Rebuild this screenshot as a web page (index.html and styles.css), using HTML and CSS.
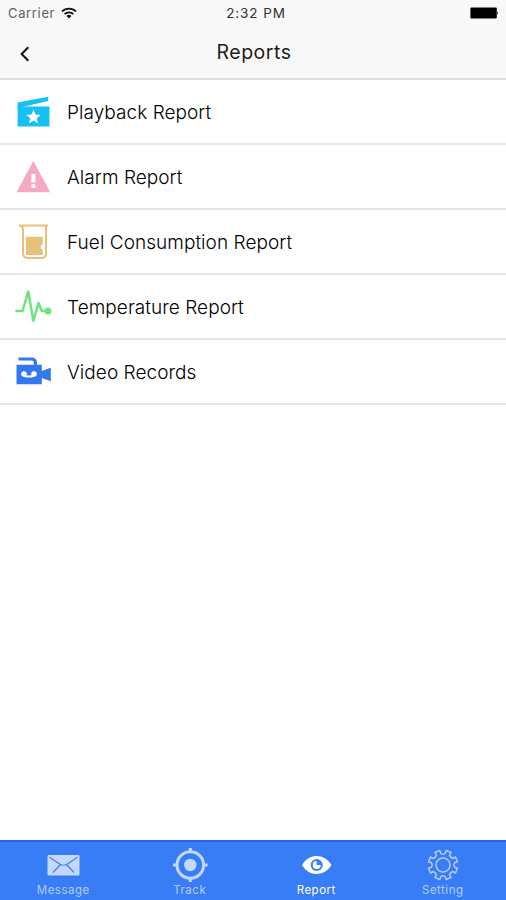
FILE: index.html
```html
<!DOCTYPE html>
<html lang="en">
<head>
<meta charset="utf-8">
<title>Reports</title>
<link rel="stylesheet" href="styles.css">
</head>
<body>
<div class="app">
  <header class="header">
    <div class="status">
      <div class="carrier"><span class="carrier-name">Carrier</span>
        <svg class="wifi" width="16" height="12" viewBox="0 0 16 12"><g fill="none" stroke="#111" stroke-width="1.8"><path d="M1 4.4a10 10 0 0 1 14 0"/><path d="M3.6 7.1a6.3 6.3 0 0 1 8.8 0"/></g><path fill="#111" d="M5.5 9a3.6 3.6 0 0 1 5 0L8 11.5z"/></svg>
      </div>
      <div class="time">2:32 PM</div>
      <div class="battery"><svg width="30" height="12" viewBox="0 0 30 12"><rect x="1.400" y=".6" width="26.4" height="10.8" rx="1"/><path d="M28.4 4q1.600 2 0 4z"/></svg></div>
    </div>
    <div class="nav">
      <a class="back" aria-label="Back"><svg width="12" height="18" viewBox="0 0 12 18"><path d="M10.300 2.200L3.600 9l6.700 6.800" fill="none" stroke="#111" stroke-width="2"/></svg></a>
      <h1 class="title">Reports</h1>
    </div>
  </header>
  <main class="list">
    <a class="row">
      <svg class="icon" viewBox="0 0 44 44"><g fill="#16c0f5"><path d="M5.600 12.400L36.200 6.800V11L9 17.200V18H5.600z"/><path fill-rule="evenodd" d="M5.600 16.600H37.500V36.500H5.600zM21.500 19.600l-2 4.900-5.200.4 4 3.400-1.300 5.100 4.500-2.800 4.500 2.800-1.300-5.100 4-3.400-5.200-.4z"/></g></svg>
      <span class="label">Playback Report</span>
    </a>
    <a class="row">
      <svg class="icon" viewBox="0 0 44 44"><path fill="#f5a9c3" d="M21.300 6L38.300 37.200H4.500z"/><path fill="#fff" d="M19.400 19h4v8.500h-4zM19.400 29.300h4v3.700h-4z"/></svg>
      <span class="label">Alarm Report</span>
    </a>
    <a class="row">
      <svg class="icon" viewBox="0 0 44 44"><path d="M7 5.500h29M8 5.500q3 1 3 4V33q0 5 5 5h13q5 0 5-5V5.500" fill="none" stroke="#e8c07c" stroke-width="2"/><path fill="#e8c07c" d="M13.800 16.800h17v7.500l-2 1.200v3l2 1.200v5.300h-17z"/></svg>
      <span class="label">Fuel Consumption Report</span>
    </a>
    <a class="row">
      <svg class="icon" viewBox="0 0 44 44"><path d="M3.400 26h7.100L16.200 6.500l5.200 29.500 5-18 3.500 8H36" fill="none" stroke="#6ce57d" stroke-width="2.500" stroke-linejoin="round"/><circle cx="36" cy="26" r="3.500" fill="#6ce57d"/></svg>
      <span class="label">Temperature Report</span>
    </a>
    <a class="row">
      <svg class="icon" viewBox="0 0 44 44"><path d="M6.500 9H19.500q4 0 4 4V17" fill="none" stroke="#3478f0" stroke-width="3.200"/><path fill="#3478f0" d="M4.500 14.800h25.300v6.200l9-3.200v13.400l-9-3.200v6.200h-25.300z"/><g fill="#fff"><circle cx="12" cy="24" r="2.800"/><circle cx="22" cy="24" r="2.800"/></g><path d="M12 25.800q5 1.600 10 0" fill="none" stroke="#fff" stroke-width="2"/></svg>
      <span class="label">Video Records</span>
    </a>
  </main>
  <nav class="tabs">
    <a class="tab">
      <svg class="tab-icon" viewBox="0 0 40 40"><rect x="4.500" y="10" width="32" height="20.500" rx="1.200" fill="#c4d7fd"/><path d="M6.500 12.200L17 19.200q3.500 2 7 0L34.500 12.200M10 27.500l7.500-8M31 27.500l-7.500-8" fill="none" stroke="#387df5" stroke-width="1.100"/></svg>
      <span>Message</span>
    </a>
    <a class="tab">
      <svg class="tab-icon" viewBox="0 0 40 40"><g fill="none" stroke="#c4d7fd" stroke-width="3"><circle cx="20.300" cy="20" r="13.300"/><path d="M20.300 3v5M20.300 32v5M3 20h5M32.600 20h5"/></g><circle cx="20.300" cy="20" r="6.200" fill="#c4d7fd"/></svg>
      <span>Track</span>
    </a>
    <a class="tab active">
      <svg class="tab-icon" viewBox="0 0 40 40"><path d="M6 20C13 8 28 8 35.500 20C28 32 13 32 6 20z" fill="#fff"/><circle cx="20.700" cy="20" r="6" fill="#387df5"/><path d="M20.700 16v4h4a4 4 0 1 1-4-4z" fill="#fff"/></svg>
      <span>Report</span>
    </a>
    <a class="tab">
      <svg class="tab-icon" viewBox="0 0 40 40"><g fill="none" stroke="#b4ccfc" stroke-width="1.500" stroke-linejoin="round"><path d="M17.800 8.500L16.800 5.500L12 7.500L13.500 10.400Q12.500 12.500 10.400 13.500L7.500 12L5.500 16.800L8.500 17.800Q10 20 8.500 22.200L5.500 23.200L7.500 28L10.400 26.500Q12.500 27.500 13.500 29.600L12 32.500L16.800 34.500L17.800 31.500Q20 30 22.200 31.500L23.200 34.500L28 32.500L26.500 29.600Q27.500 27.500 29.600 26.500L32.500 28L34.500 23.200L31.500 22.200Q30 20 31.500 17.800L34.500 16.800L32.500 12L29.600 13.500Q27.500 12.500 26.500 10.400L28 7.500L23.200 5.500L22.200 8.500Q20 10 17.800 8.500z"/><circle cx="20" cy="20" r="7"/></g></svg>
      <span>Setting</span>
    </a>
  </nav>
</div>
</body>
</html>
```
FILE: styles.css
```css
* { box-sizing: border-box; }
body { margin: 0; font-family: Inter, "Liberation Sans", sans-serif; color: #1c1c1c; background: #fff; }
.app { height: 900px; display: flex; flex-direction: column; }
.header { height: 80px; background: #f8f8f8; border-bottom: 2px solid #dedede; }
.status { height: 26px; display: grid; grid-template-columns: 1fr auto 1fr; align-items: center; padding: 0 7px 0 8px; font-size: 13px; letter-spacing: .35px; }
.carrier { display: flex; align-items: center; gap: 6px; }
.carrier-name { color: #606060; letter-spacing: .65px; }
.time { color: #333; padding-left: 5px; font-size: 13.5px; letter-spacing: .9px; }
.battery { display: flex; justify-content: flex-end; }
.nav { height: 52px; display: grid; grid-template-columns: 60px 1fr 60px; align-items: center; }
.back { display: flex; padding-left: 18px; padding-top: 3px; }
.title { margin: 0; padding-left: 2px; text-align: center; font-size: 19.5px; font-weight: 400; letter-spacing: .5px; }
.list { flex: 1; }
.row { height: 65px; display: flex; align-items: center; gap: 11px; padding-left: 12px; border-bottom: 2px solid #e6e6e6; }
.icon { width: 44px; height: 44px; flex: none; }
.label { padding-top: 2px; font-size: 19px; font-weight: 300; letter-spacing: .05px; color: #000; white-space: nowrap; }
.tabs { height: 60px; display: grid; grid-template-columns: repeat(4, 1fr); background: #387df5; border-top: 2px solid #1f6ddd; }
.tab { display: flex; flex-direction: column; align-items: center; color: #b4ccfc; font-size: 11.5px; line-height: 14px; letter-spacing: .5px; padding-top: 3px; }
.tab-icon { width: 40px; height: 40px; flex: none; margin-bottom: -2px; }
.active { color: #fff; }
```
